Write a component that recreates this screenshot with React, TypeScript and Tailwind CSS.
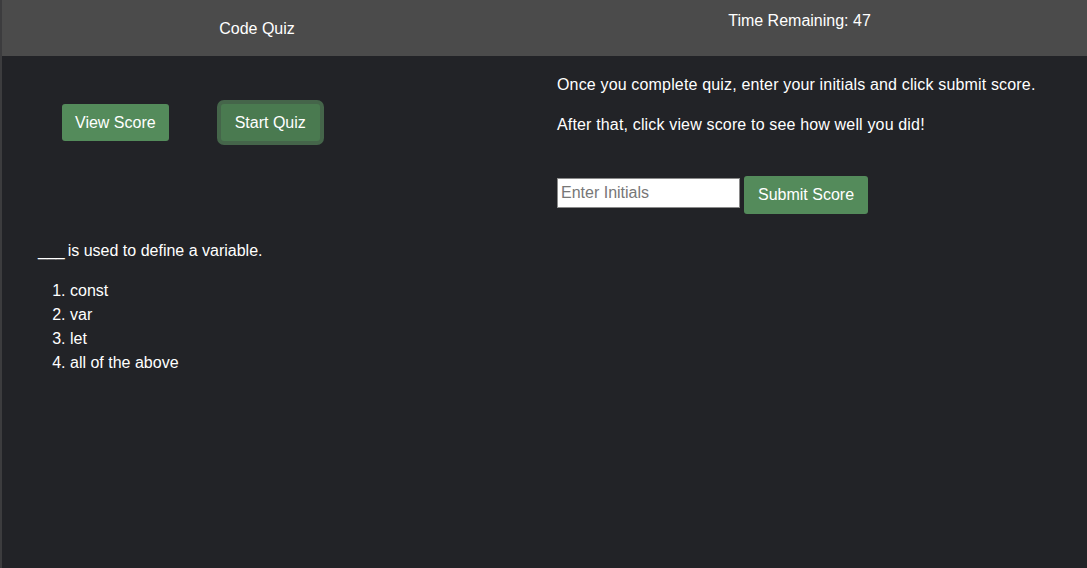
import React from "react";

export default function App() {
  return (
    <div
      className="w-[1087px] h-[568px] bg-[#222327] text-white flex flex-col border-l-2 border-[#3c3c3e] overflow-hidden"
      style={{ fontFamily: '"Liberation Sans", Arial, sans-serif' }}
    >
      <header className="h-[56px] bg-[#4b4b4b] flex shrink-0">
        <div className="w-[510px] flex justify-center pt-[19px] text-[16px] leading-[20px]">Code Quiz</div>
        <div className="flex-1 flex justify-center pt-[11px] text-[16px] leading-[20px]">Time Remaining: 47</div>
      </header>
      <div className="flex flex-1">
        <div className="w-[555px] flex flex-col">
          <div className="flex items-center pl-[60px] pt-[48px] gap-[52px]">
            <button className="h-[37px] px-[13px] rounded-[3px] bg-[#548b5b] text-[16px] text-white">View Score</button>
            <button className="h-[37px] px-[14px] rounded-[3px] bg-[#4a7a50] text-[16px] text-white ring-4 ring-[#45654a]">Start Quiz</button>
          </div>
          <p className="pl-[36px] mt-[100px] text-[16px] leading-[20px]">
            ___<span className="ml-[3px]">is used to define a variable.</span>
          </p>
          <ol className="list-decimal pl-[68px] mt-[18px] text-[16px] leading-[24px]">
            <li>const</li>
            <li>var</li>
            <li>let</li>
            <li>all of the above</li>
          </ol>
        </div>
        <div className="flex-1 flex flex-col pt-[19px]">
          <p className="text-[16px] leading-[20px] tracking-[0.16px]">Once you complete quiz, enter your initials and click submit score.</p>
          <p className="text-[16px] leading-[20px] mt-[20px] tracking-[0.16px]">After that, click view score to see how well you did!</p>
          <div className="flex items-start gap-[4px] mt-[41px]">
            <input
              placeholder="Enter Initials"
              className="mt-[2px] w-[183px] h-[30px] bg-white border border-[#8a8a8a] text-black text-[16px] px-[3px] placeholder:text-[#777]"
            />
            <button className="h-[38px] px-[14px] rounded-[3px] bg-[#548b5b] text-[16px] text-white">Submit Score</button>
          </div>
        </div>
      </div>
    </div>
  );
}
